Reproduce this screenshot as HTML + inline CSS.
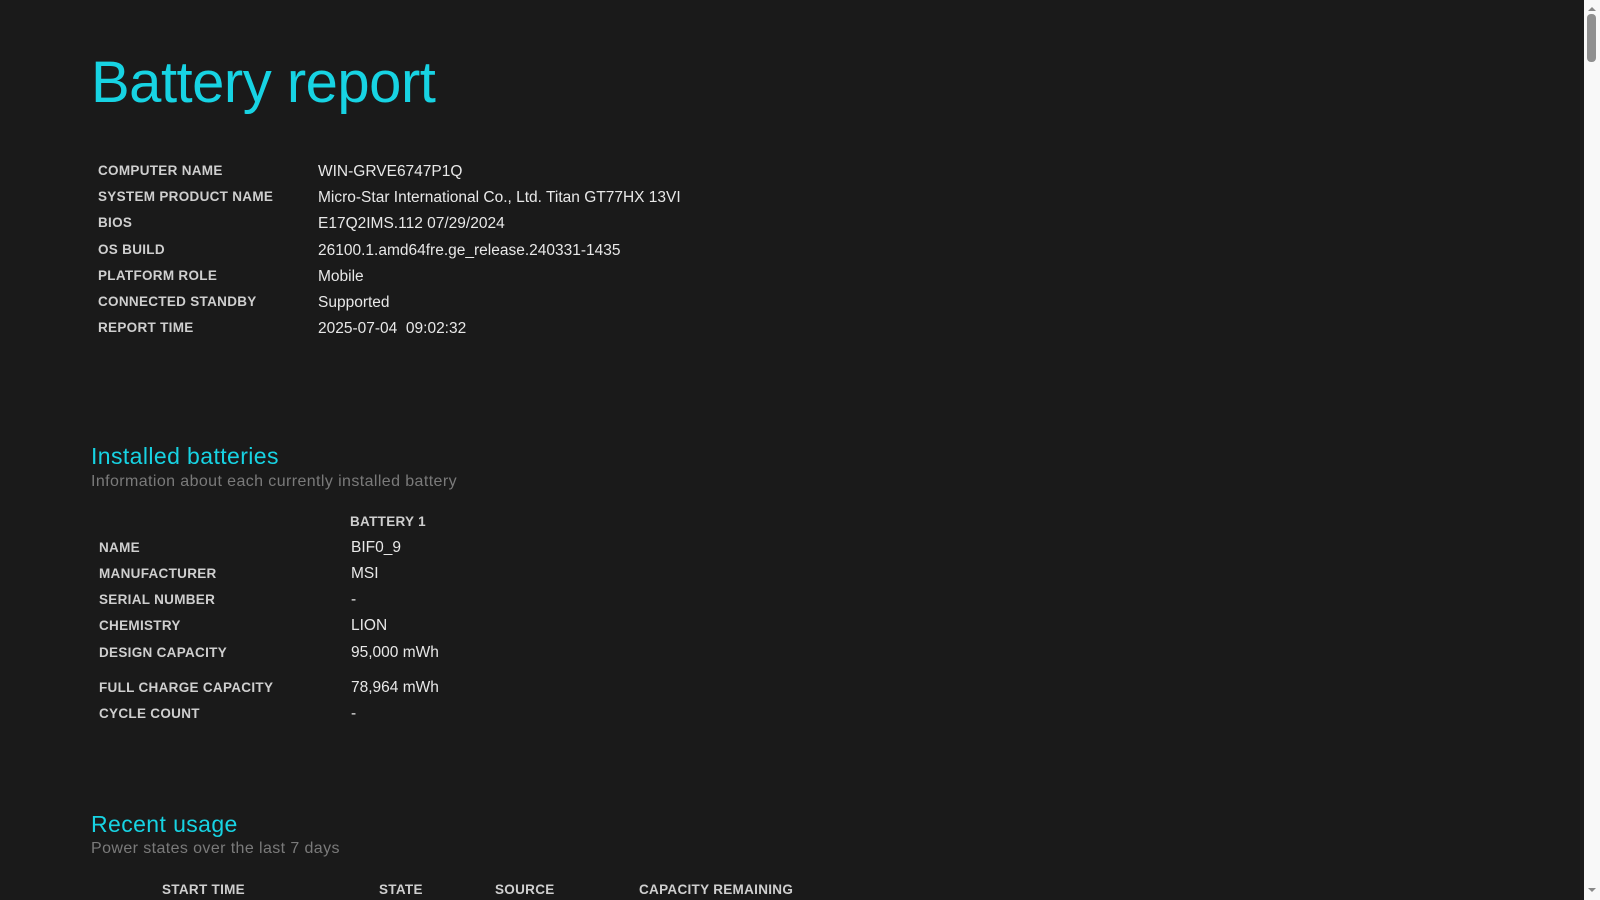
<!DOCTYPE html>
<html><head><style>
body{margin:0;width:1600px;height:900px;background:#1a1a1a;overflow:hidden;font-family:"Liberation Sans",sans-serif;position:relative}
.a{position:absolute;white-space:nowrap;line-height:1}
.t{color:#17d3e3;font-size:58px;left:91px;top:54px;letter-spacing:-0.5px}
.l{color:#cfcfcf;font-size:13.5px;font-weight:bold;letter-spacing:0.3px}
.v{color:#e8e8e8;font-size:15.5px}
.h{color:#17d3e3;font-size:23px;letter-spacing:0.4px}
.s{color:#7a7a7a;font-size:16px;letter-spacing:0.4px}
#sb{position:absolute;left:1584px;top:0;width:16px;height:900px;background:#f8f8f8}
#th{position:absolute;left:1587px;top:14px;width:9px;height:48px;background:#8f8f8f;border-radius:4px}
</style></head><body>
<div class="a t">Battery report</div>
<div class="a l" style="left:98px;top:164px">COMPUTER NAME</div><div class="a v" style="left:318px;top:164px">WIN-GRVE6747P1Q</div>
<div class="a l" style="left:98px;top:190px">SYSTEM PRODUCT NAME</div><div class="a v" style="left:318px;top:190px">Micro-Star International Co., Ltd. Titan GT77HX 13VI</div>
<div class="a l" style="left:98px;top:216px">BIOS</div><div class="a v" style="left:318px;top:216px">E17Q2IMS.112 07/29/2024</div>
<div class="a l" style="left:98px;top:243px">OS BUILD</div><div class="a v" style="left:318px;top:243px">26100.1.amd64fre.ge_release.240331-1435</div>
<div class="a l" style="left:98px;top:269px">PLATFORM ROLE</div><div class="a v" style="left:318px;top:269px">Mobile</div>
<div class="a l" style="left:98px;top:295px">CONNECTED STANDBY</div><div class="a v" style="left:318px;top:295px">Supported</div>
<div class="a l" style="left:98px;top:321px">REPORT TIME</div><div class="a v" style="left:318px;top:321px">2025-07-04 &nbsp;09:02:32</div>

<div class="a h" style="left:91px;top:445px">Installed batteries</div>
<div class="a s" style="left:91px;top:474px">Information about each currently installed battery</div>
<div class="a l" style="left:350px;top:515px">BATTERY 1</div>
<div class="a l" style="left:99px;top:541px">NAME</div><div class="a v" style="left:351px;top:540px">BIF0_9</div>
<div class="a l" style="left:99px;top:567px">MANUFACTURER</div><div class="a v" style="left:351px;top:566px">MSI</div>
<div class="a l" style="left:99px;top:593px">SERIAL NUMBER</div><div class="a v" style="left:351px;top:592px">-</div>
<div class="a l" style="left:99px;top:619px">CHEMISTRY</div><div class="a v" style="left:351px;top:618px">LION</div>
<div class="a l" style="left:99px;top:646px">DESIGN CAPACITY</div><div class="a v" style="left:351px;top:645px">95,000 mWh</div>
<div class="a l" style="left:99px;top:681px">FULL CHARGE CAPACITY</div><div class="a v" style="left:351px;top:680px">78,964 mWh</div>
<div class="a l" style="left:99px;top:707px">CYCLE COUNT</div><div class="a v" style="left:351px;top:706px">-</div>

<div class="a h" style="left:91px;top:813px">Recent usage</div>
<div class="a s" style="left:91px;top:841px">Power states over the last 7 days</div>
<div class="a l" style="left:162px;top:883px">START TIME</div>
<div class="a l" style="left:379px;top:883px">STATE</div>
<div class="a l" style="left:495px;top:883px">SOURCE</div>
<div class="a l" style="left:639px;top:883px">CAPACITY REMAINING</div>
<div id="sb"><div style="position:absolute;left:4px;top:7px;border:4px solid transparent;border-bottom:4px solid #888;border-top:0"></div><div style="position:absolute;left:4px;top:888px;border:4px solid transparent;border-top:4px solid #888;border-bottom:0"></div></div>
<div id="th"></div>
</body></html>
